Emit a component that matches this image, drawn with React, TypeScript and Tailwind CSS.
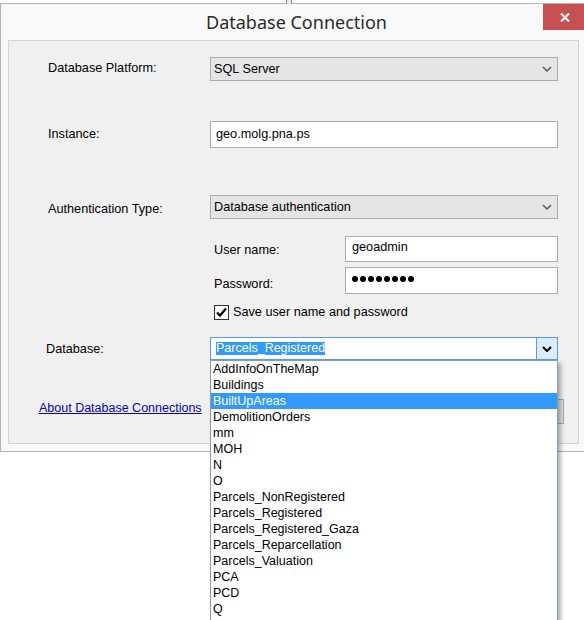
import React from "react";

const items = [
  "AddInfoOnTheMap",
  "Buildings",
  "BuiltUpAreas",
  "DemolitionOrders",
  "mm",
  "MOH",
  "N",
  "O",
  "Parcels_NonRegistered",
  "Parcels_Registered",
  "Parcels_Registered_Gaza",
  "Parcels_Reparcellation",
  "Parcels_Valuation",
  "PCA",
  "PCD",
  "Q",
  "Regions",
];

function Chevron({ className, sw = 1.5 }: { className?: string; sw?: number }) {
  return (
    <svg width="10" height="6" viewBox="0 0 10 6" className={className}>
      <path d="M1 1 L5 5 L9 1" fill="none" stroke="currentColor" strokeWidth={sw} />
    </svg>
  );
}

export default function App() {
  return (
    <div className="relative w-[584px] h-[620px] overflow-hidden bg-white font-['Liberation_Sans',Arial,sans-serif] text-black">
      <div className="absolute left-[286px] top-0 w-[6px] h-[4px] border-x border-[#8a8a8a] bg-[#e8e8e8]" />
      <div className="mt-[3px] w-[587px] h-[449px] border border-[#b4b4b4] bg-[#f9f9f9] flex flex-col">
        <div className="relative h-[36px] shrink-0 flex items-center justify-center pl-[6px]">
          <span className="font-['Noto_Sans',sans-serif] text-[18px] leading-none text-[#2b2b2b]">
            Database Connection
          </span>
          <div className="absolute left-[542px] top-0 w-[46px] h-[26px] bg-[#c75050] flex items-center justify-center pr-[2px]">
            <svg width="10" height="9" viewBox="0 0 10 9">
              <path d="M1 0.5 L9 8.5 M9 0.5 L1 8.5" stroke="white" strokeWidth="2" />
            </svg>
          </div>
        </div>

        <div className="relative mx-[7px] h-[404px] border border-[#d5d5d5] bg-[#f0f0f0] flex flex-col text-[12.7px] leading-[16px]">
          {/* Platform */}
          <div className="flex items-start mt-[16px] pl-[39px]">
            <div className="w-[162px] mt-[3px]">Database Platform:</div>
            <div className="w-[348px] h-[24px] border border-[#acacac] bg-[#e5e5e5] flex items-center pl-[3px] pr-[5px]">
              <span>SQL Server</span>
              <Chevron className="ml-auto text-[#5a5a5a]" />
            </div>
          </div>

          {/* Instance */}
          <div className="flex items-start mt-[40px] pl-[39px]">
            <div className="w-[162px] mt-[5px]">Instance:</div>
            <div className="w-[348px] h-[27px] border border-[#abadb3] bg-white pl-[5px] pt-[4px]">
              geo.molg.pna.ps
            </div>
          </div>

          {/* Auth */}
          <div className="flex items-start mt-[47px] pl-[39px]">
            <div className="w-[162px] mt-[6px]">Authentication Type:</div>
            <div className="w-[348px] h-[24px] border border-[#acacac] bg-[#e5e5e5] flex items-center pl-[3px] pr-[5px]">
              <span>Database authentication</span>
              <Chevron className="ml-auto text-[#5a5a5a]" />
            </div>
          </div>

          {/* User name */}
          <div className="flex items-start mt-[17px] pl-[205px]">
            <div className="w-[131px] mt-[6px]">User name:</div>
            <div className="w-[213px] h-[26px] border border-[#abadb3] bg-white pl-[6px] pt-[2px]">
              geoadmin
            </div>
          </div>

          {/* Password */}
          <div className="flex items-start mt-[5px] pl-[205px]">
            <div className="w-[131px] mt-[9px]">Password:</div>
            <div className="w-[213px] h-[27px] border border-[#abadb3] bg-white pl-[6px] pt-[8px] flex items-start gap-[2px]">
              {Array.from({ length: 8 }).map((_, i) => (
                <span key={i} className="block w-[6px] h-[6px] rounded-full bg-black" />
              ))}
            </div>
          </div>

          {/* Checkbox */}
          <div className="flex items-center gap-[4px] mt-[10px] pl-[205px]">
            <div className="w-[15px] h-[15px] border border-[#333333] bg-white flex items-center justify-center">
              <svg width="13" height="13" viewBox="0 0 13 13">
                <path d="M2 6.5 L5 9.5 L11 2.5" fill="none" stroke="black" strokeWidth="2.3" />
              </svg>
            </div>
            <span>Save user name and password</span>
          </div>

          {/* Database */}
          <div className="flex items-start mt-[17px] pl-[37px]">
            <div className="w-[164px] mt-[4px]">Database:</div>
            <div className="w-[348px] h-[23px] border border-[#569de5] bg-white flex items-stretch">
              <div className="flex-1 flex items-center pl-[5px]">
                <span className="bg-[#3399ff] text-white text-[12.5px] leading-[13px]">Parcels_Registered</span>
              </div>
              <div className="w-[21px] bg-[#dcecfc] border-l border-[#569de5] flex items-center justify-center">
                <Chevron className="text-black" sw={2} />
              </div>
            </div>
          </div>

          {/* Bottom row */}
          <div className="flex items-start mt-[39px] pl-[30px] pr-[14px]">
            <a className="mt-[1px] text-[12.5px] text-[#0000cc] underline cursor-pointer">
              About Database Connections
            </a>
            <div className="ml-auto w-[75px] h-[25px] border border-[#acacac] bg-[#e1e1e1]" />
          </div>

          {/* Dropdown list popup */}
          <div className="absolute left-[201px] top-[319px] w-[348px] border border-[#7f9db9] bg-white shadow-[3px_3px_4px_rgba(0,0,0,0.3)]">
            {items.map((it) => (
              <div
                key={it}
                className={
                  "h-[16px] leading-[16px] text-[12.5px] pl-[2px] whitespace-nowrap " +
                  (it === "BuiltUpAreas" ? "bg-[#3399ff] text-white" : "text-black")
                }
              >
                {it}
              </div>
            ))}
          </div>
        </div>
      </div>
    </div>
  );
}
